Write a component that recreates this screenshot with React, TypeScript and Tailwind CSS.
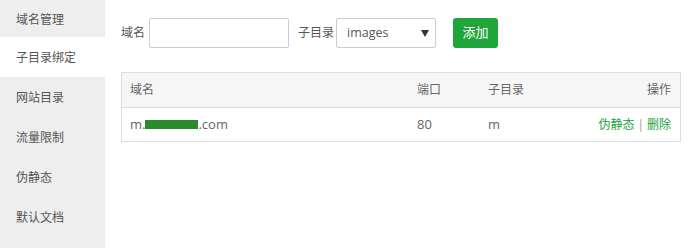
import React from "react";

const items = ["域名管理", "子目录绑定", "网站目录", "流量限制", "伪静态", "默认文档"];

export default function App() {
  return (
    <div
      className="flex w-[694px] h-[248px] bg-white overflow-hidden text-[#555]"
      style={{ fontFamily: '"Open Sans", "Noto Sans CJK SC", sans-serif' }}
    >
      <div className="w-[105px] shrink-0 bg-[#eeeeee] flex flex-col">
        {items.map((t, i) => (
          <div
            key={t}
            className={
              (i === 0 ? "h-[37px] " : "h-10 ") +
              "flex items-center pl-4 pt-[2px] text-[12px] " +
              (i === 1 ? "bg-white text-[#555]" : "text-[#555]")
            }
          >
            {t}
          </div>
        ))}
      </div>
      <div className="flex-1 pl-4 pr-[13px] pt-[18px]">
        <div className="flex items-center h-[30px] text-[12px]">
          <span className="mr-[4px]">域名</span>
          <input className="w-[140px] h-[30px] border border-[#cccccc] rounded-[2px] outline-none px-2" />
          <span className="ml-[9px] mr-[2px]">子目录</span>
          <div className="relative w-[100px] h-[30px] border border-[#cccccc] rounded-[2px] flex items-center pl-[10px] text-[12.5px] text-[#555]">
            images
            <svg className="absolute right-[6px] top-[11px]" width="8" height="7" viewBox="0 0 8 7">
              <path d="M0 0 L8 0 L4 7 Z" fill="#333" />
            </svg>
          </div>
          <button className="ml-[17px] w-[45px] h-[30px] rounded-[3px] bg-[#20a53a] text-white text-[13px] flex items-center justify-center">
            添加
          </button>
        </div>
        <div className="mt-[24px] border border-[#dddddd] text-[12px] text-[#666]">
          <div className="flex items-center h-[35px] bg-[#f6f6f6] border-b border-[#dddddd]">
            <div className="w-[295px] pl-[8px]">域名</div>
            <div className="w-[71px]">端口</div>
            <div className="w-[100px]">子目录</div>
            <div className="flex-1 text-right pr-[9px]">操作</div>
          </div>
          <div className="flex items-center h-[33px]">
            <div className="w-[295px] pl-[8px] flex items-center text-[13px]">
              m.<span className="inline-block w-[53px] h-[9px] bg-[#2a8a2e]" />.com
            </div>
            <div className="w-[71px] text-[13px]">80</div>
            <div className="w-[100px] text-[13px]">m</div>
            <div className="flex-1 text-right pr-[9px]">
              <span className="text-[#20a53a]">伪静态</span>
              <span className="text-[#999] mx-[3px]">|</span>
              <span className="text-[#20a53a]">删除</span>
            </div>
          </div>
        </div>
      </div>
    </div>
  );
}
